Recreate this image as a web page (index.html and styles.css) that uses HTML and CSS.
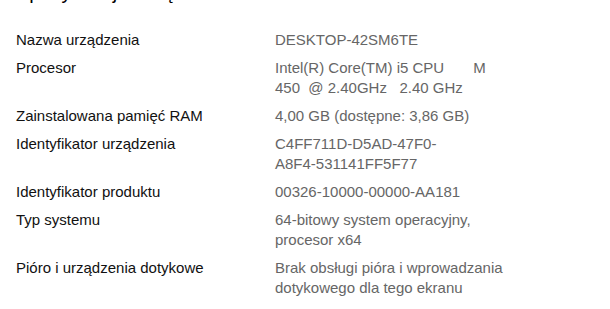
FILE: index.html
```html
<!DOCTYPE html>
<html lang="pl">
<head>
  <meta charset="UTF-8" />
  <meta name="viewport" content="width=device-width, initial-scale=1.0"/>
  <title>Informacje – Ustawienia</title>
  <link rel="stylesheet" href="styles.css">
</head>

<body>
  <div class="page">
    <h2>Specyfikacje urządzenia</h2>

    <!-- Device specs -->
    <dl class="specs">
      <dt>Nazwa urządzenia</dt>
      <dd>DESKTOP-42SM6TE</dd>

      <dt>Procesor</dt>
      <dd class="pre">Intel(R) Core(TM) i5 CPU       M<br>450  @ 2.40GHz   2.40 GHz</dd>

      <dt>Zainstalowana pamięć RAM</dt>
      <dd>4,00 GB (dostępne: 3,86 GB)</dd>

      <dt>Identyfikator urządzenia</dt>
      <dd>C4FF711D-D5AD-47F0-<br>A8F4-531141FF5F77</dd>

      <dt>Identyfikator produktu</dt>
      <dd>00326-10000-00000-AA181</dd>

      <dt>Typ systemu</dt>
      <dd>64-bitowy system operacyjny,<br>procesor x64</dd>

      <dt>Pióro i urządzenia dotykowe</dt>
      <dd>Brak obsługi pióra i wprowadzania<br>dotykowego dla tego ekranu</dd>
    </dl>
  </div>
</body>
</html>
```

FILE: styles.css
```css
body {
  font-family: 'Liberation Sans', Arial, sans-serif;
  margin: 0;
  padding: 0;
  background-color: #ffffff;
  overflow: hidden;
}

.page {
  padding: 0 16px;
}

h2 {
  color: #000;
  font-size: 20px;
  font-weight: normal;
  line-height: 28px;
  margin: -22px 0 24px;
}

.specs {
  display: grid;
  grid-template-columns: 259px 1fr;
  row-gap: 8px;
  margin: 0;
  font-size: 15px;
  line-height: 20px;
}

.specs dt {
  color: #111;
  white-space: nowrap;
}

.specs dd {
  margin: 0;
  color: #666;
  white-space: nowrap;
}

.specs .pre {
  white-space: pre;
}
```
